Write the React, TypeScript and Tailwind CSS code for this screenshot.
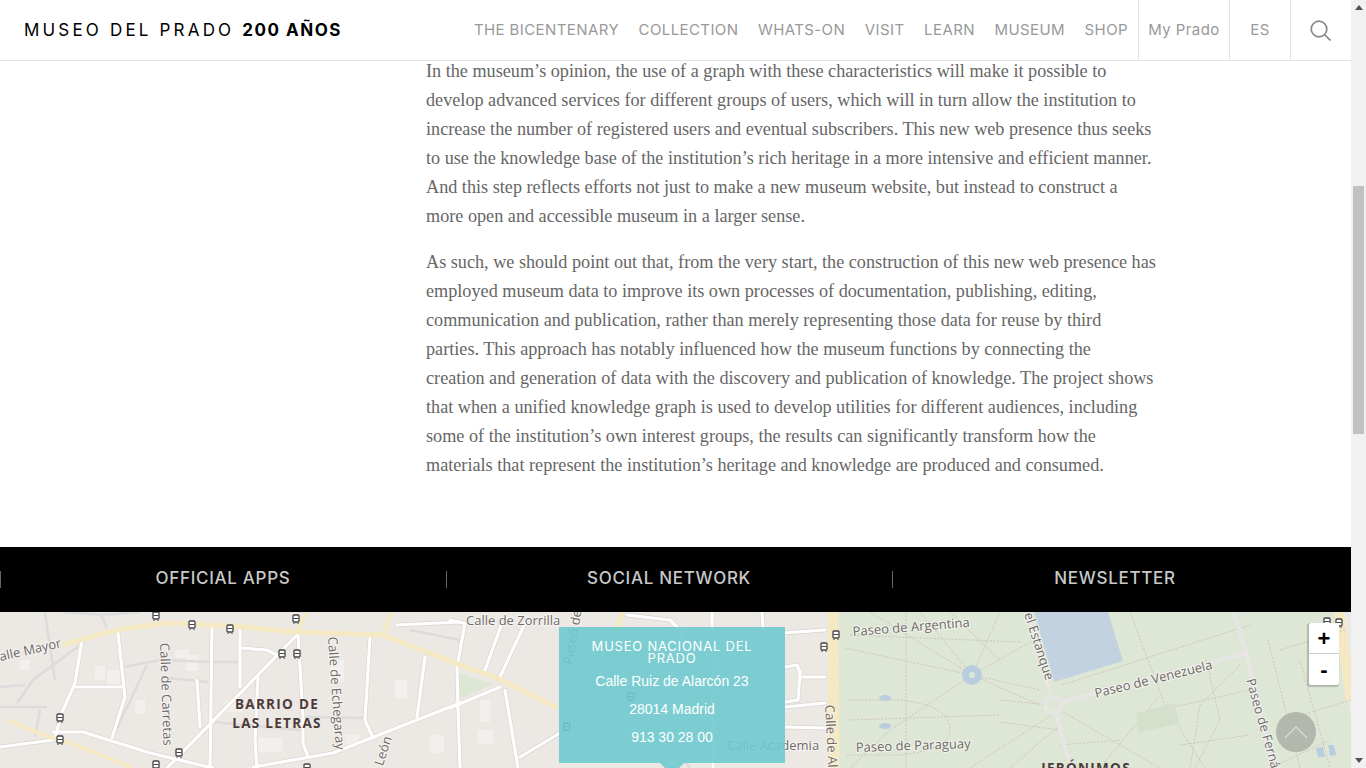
const p1 = [
  "In the museum’s opinion, the use of a graph with these characteristics will make it possible to",
  "develop advanced services for different groups of users, which will in turn allow the institution to",
  "increase the number of registered users and eventual subscribers. This new web presence thus seeks",
  "to use the knowledge base of the institution’s rich heritage in a more intensive and efficient manner.",
  "And this step reflects efforts not just to make a new museum website, but instead to construct a",
  "more open and accessible museum in a larger sense.",
];
const p2 = [
  "As such, we should point out that, from the very start, the construction of this new web presence has",
  "employed museum data to improve its own processes of documentation, publishing, editing,",
  "communication and publication, rather than merely representing those data for reuse by third",
  "parties. This approach has notably influenced how the museum functions by connecting the",
  "creation and generation of data with the discovery and publication of knowledge. The project shows",
  "that when a unified knowledge graph is used to develop utilities for different audiences, including",
  "some of the institution’s own interest groups, the results can significantly transform how the",
  "materials that represent the institution’s heritage and knowledge are produced and consumed.",
];
const nav = ["THE BICENTENARY", "COLLECTION", "WHATS-ON", "VISIT", "LEARN", "MUSEUM", "SHOP"];

const white = [
  "M82 640 L75 683 L60 717 L55 740",
  "M118 633 L125 697 L112 738",
  "M212 627 L210 768",
  "M240 628 L240 687",
  "M240 648 L267 650 L283 658",
  "M297 635 L167 768",
  "M298 633 L303 717 L303 743 L308 757",
  "M258 677 L255 740 L257 768",
  "M370 637 L365 720 L373 738",
  "M425 657 L417 717",
  "M460 703 L333 753 L253 767",
  "M53 732 L83 732 L150 753 L213 768",
  "M0 747 L53 740",
  "M75 687 L123 687",
  "M197 680 L200 727",
  "M397 625 L460 622",
  "M465 623 L457 667 L458 708 L460 768",
  "M502 623 L485 670",
  "M525 623 L500 677",
  "M505 690 L518 768",
  "M450 708 L500 687",
  "M560 733 L520 757",
  "M627 615 L670 620 L680 630 L684 650",
  "M712 612 L713 768",
  "M762 612 L763 627",
  "M783 633 L825 630",
  "M785 667 L797 665 L800 672 L798 700 L785 702",
  "M802 677 L825 677",
  "M785 707 L825 703",
  "M785 727 L825 728",
  "M450 620 L463 623",
];
const grey = [
  "M45 613 L55 680",
  "M0 687 L25 685",
  "M80 645 L33 680 L17 703",
  "M0 707 L47 707",
  "M40 710 L35 737",
  "M123 667 L160 660 L210 662 L238 662",
  "M147 665 L113 737",
  "M168 678 L208 682",
  "M100 613 L107 628",
  "M63 612 L103 615 L140 612",
  "M213 722 L300 730",
  "M305 717 L365 718",
  "M20 650 L0 660",
  "M410 630 L460 640",
  "M590 690 L660 730 L690 768",
  "M610 720 L640 670 L700 660",
];
const dashes = [
  "M870 612 L972 675 L1034 640","M845 648 L972 675 L1040 690","M972 675 L890 730 L850 768","M972 675 L1040 705","M972 675 L1000 612","M972 675 L920 612",
  "M848 700 L900 700 Q950 705 950 730 Q950 750 900 755 L845 755","M906 612 L906 768","M850 635 L1020 642","M1063 712 L1160 768","M1056 712 L970 768","M1060 725 L1010 768",
  "M1062 685 L1250 625","M1130 612 L1165 705 L1205 768","M1100 768 L1160 695","M1190 768 L1200 705 L1240 665","M1160 710 L1250 690","M1206 660 L1220 720 L1195 768",
  "M1050 612 L1060 680","M1268 640 L1300 768","M1280 650 L1345 630","M1285 720 L1351 700","M1300 660 L1330 768","M1270 768 L1330 740","M1180 745 L1250 735","M1120 740 L1060 745",
  "M1000 700 L1050 705","M1000 722 L1060 730","M850 720 L1000 715","M950 612 L1000 660",
];
const patches = [[107,670,13,18],[95,666,10,14],[186,655,12,16],[225,700,18,12],[258,738,24,14],[330,660,14,22],[395,680,12,18],[20,660,10,10],[135,700,10,14],[345,735,14,10],[480,700,10,22],[478,730,16,14],[430,735,14,18],[175,650,14,8]];
const trams = [[156,616],[192,625],[230,629],[296,619],[282,654],[297,654],[60,718],[60,740],[179,753],[156,765],[307,768],[836,635],[824,647],[631,697],[567,727],[1327,622],[1339,623]];

function MapArt() {
  const txt = { fontFamily: "'Open Sans', sans-serif", fontSize: 13, fill: "#6f6a66", stroke: "#ffffff", strokeOpacity: 0.55, strokeWidth: 2, style: { paintOrder: "stroke" as const } };
  return (
    <svg width="1351" height="156" viewBox="0 612 1351 156" className="block">
      <rect x="0" y="612" width="1351" height="156" fill="#ece8e4" />
      {patches.map(([x, y, w, h]) => <rect key={x + "-" + y} x={x} y={y} width={w} height={h} fill="#f2efec" />)}
      <path d="M838 612 H1351 V768 H838 Z" fill="#dee7d6" />
      <path d="M1336 612 H1351 V720 Z" fill="#ece8e4" />
      <path d="M455 672 L494 684 L458 700 Z" fill="#dee7d6" />
      <path d="M560 640 L700 640 L720 700 L640 760 L560 730 Z" fill="#dee7d6" opacity="0.5" />
      {grey.map((d) => <path key={d} d={d} stroke="#dcdcdc" strokeWidth="2.5" fill="none" />)}
      {white.map((d) => <path key={"c" + d} d={d} stroke="#d8d5d1" strokeWidth="4.4" fill="none" strokeLinejoin="round" strokeLinecap="round" />)}
      {white.map((d) => <path key={d} d={d} stroke="#ffffff" strokeWidth="3.2" fill="none" strokeLinejoin="round" strokeLinecap="round" />)}
      <path d="M62 645 L117 630 L167 623 L233 626 L297 632 L383 635 L460 665 L497 678 L558 708" stroke="#f5e9c4" strokeWidth="5" fill="none" strokeLinejoin="round" />
      <path d="M7 720 L50 737 L70 743 L133 768" stroke="#f5e9c4" strokeWidth="4" fill="none" />
      <path d="M622 612 L617 633" stroke="#f5e9c4" strokeWidth="5" fill="none" />
      <path d="M297 632 L306 612 M383 635 L391 612" stroke="#f5e9c4" strokeWidth="4" fill="none" />
      <path d="M833 612 L834 768" stroke="#f5e9c4" strokeWidth="11" fill="none" />
      <path d="M1339 612 L1351 700" stroke="#f5e9c4" strokeWidth="10" fill="none" />
      {dashes.map((d) => <path key={d} d={d} stroke="#cfc4b7" strokeWidth="1" strokeDasharray="2 1.5" fill="none" />)}
      <path d="M1034 612 H1108 L1123 661 L1054 682 Z" fill="#c3d2e1" />
      <circle cx="972" cy="675" r="10" fill="#b9cde0" />
      <circle cx="972" cy="675" r="3" fill="#dee7d6" />
      <ellipse cx="885" cy="698" rx="6" ry="3" fill="#b9cde0" />
      <ellipse cx="885" cy="726" rx="6" ry="3" fill="#b9cde0" />
      <path d="M1316 748 L1323 747 L1325 757 L1318 757 Z M1328 745 L1334 745 L1336 755 L1330 756 Z" fill="#b9cde0" />
      <path d="M1136 713 L1174 703 L1179 723 L1138 733 Z" fill="#d6dfca" />
      <path d="M1026 612 L1051 695 M1056 715 L1071 768 M1063 702 L1246 653 M1234 612 L1246 653 L1273 768" stroke="#e8e6e4" strokeWidth="4" fill="none" />
      <circle cx="1053" cy="705" r="8" fill="#dee7d6" stroke="#e8e6e4" strokeWidth="4" />
      {trams.map(([x, y]) => (
        <g key={x + "-" + y} transform={`translate(${x - 3} ${y - 4})`}>
          <rect x="0" y="0" width="6" height="7" rx="1" fill="#ffffff" stroke="#444444" strokeWidth="1.3" />
          <path d="M0.5 3.5 H5.5" stroke="#444444" />
          <path d="M1 8 V9 M5 8 V9" stroke="#444444" />
        </g>
      ))}
      <text {...txt} textAnchor="end" transform="translate(62 647) rotate(-13)">Calle Mayor</text>
      <text {...txt} transform="translate(466 625)">Calle de Zorrilla</text>
      <text {...txt} transform="translate(572 665) rotate(-80)">Paseo de</text>
      <text {...txt} transform="translate(160 643) rotate(88)">Calle de Carretas</text>
      <text {...txt} transform="translate(328 637) rotate(86)">Calle de Echegaray</text>
      <text {...txt} textAnchor="end" transform="translate(392 738) rotate(-72)">Calle de León</text>
      <text {...txt} transform="translate(825 705) rotate(87)">Calle de Al</text>
      <text {...txt} x="727" y="750">Calle Academia</text>
      <text {...txt} transform="translate(853 636) rotate(-4.5)">Paseo de Argentina</text>
      <text {...txt} transform="translate(856 752) rotate(-2)">Paseo de Paraguay</text>
      <text {...txt} transform="translate(1024 614) rotate(72)">el Estanque</text>
      <text {...txt} transform="translate(1096 698) rotate(-14)">Paseo de Venezuela</text>
      <text {...txt} transform="translate(1246 680) rotate(74)">Paseo de Fernán</text>
      <g fontFamily="'Open Sans', sans-serif" fontSize="13.5" fontWeight="700" letterSpacing="1.3" fill="#4d3b3b" textAnchor="middle">
        <text x="277" y="709">BARRIO DE</text>
        <text x="277" y="728">LAS LETRAS</text>
        <text x="1086" y="773">JERÓNIMOS</text>
      </g>
    </svg>
  );
}

export default function App() {
  return (
    <div className="flex h-[768px] w-[1366px] overflow-hidden bg-white">
      <div className="flex w-[1351px] flex-col">
        <header className="relative z-10 flex h-[61px] shrink-0 items-stretch border-b border-[#e2e2e2] bg-white font-['Inter',sans-serif]">
          <div className="flex flex-1 items-center pl-6 pt-[1px] text-[17px] tracking-[0.187em] text-black">
            MUSEO DEL PRADO&nbsp;<b className="font-bold tracking-[0.09em]">200 AÑOS</b>
          </div>
          <nav className="flex items-center gap-[19.6px] pr-[10px] text-[15px] tracking-[0.4px] text-[#999999]">
            {nav.map((n) => <span key={n}>{n}</span>)}
          </nav>
          <div className="flex w-[91px] items-center justify-center border-l border-[#e2e2e2] text-[15px] tracking-[0.4px] text-[#999999]">My Prado</div>
          <div className="flex w-[61px] items-center justify-center border-l border-[#e2e2e2] text-[15px] tracking-[0.4px] text-[#999999]">ES</div>
          <div className="flex w-[61px] items-center justify-center border-l border-[#e2e2e2] pr-[2px]">
            <svg width="21" height="21" viewBox="0 0 21 21" fill="none" stroke="#888888" strokeWidth="1.7">
              <circle cx="9" cy="9" r="7.8" />
              <path d="M14.5 14.5 L20.5 20.5" />
            </svg>
          </div>
        </header>
        <main className="h-[486px] shrink-0 pl-[426px] font-['Liberation_Serif',serif] text-[18.2px] leading-[29px] text-[#666666]">
          <p className="-mt-[4px] mb-[17px] whitespace-nowrap">
            {p1.map((l) => <span key={l} className="block">{l}</span>)}
          </p>
          <p className="whitespace-nowrap">
            {p2.map((l) => <span key={l} className="block">{l}</span>)}
          </p>
        </main>
        <section className="grid h-[65px] shrink-0 grid-cols-[446px_446px_446px_13px] bg-black font-['Inter',sans-serif] text-[17px] font-medium tracking-[0.7px] text-[#c8c8c8]">
          {["OFFICIAL APPS", "SOCIAL NETWORK", "NEWSLETTER"].map((t) => (
            <div key={t} className="relative flex items-center justify-center pb-[2px]">
              <span className="absolute left-0 top-[24px] h-[17px] w-px bg-[#666666]" />
              <span>{t}</span>
            </div>
          ))}
        </section>
        <section className="relative h-[156px] shrink-0 overflow-hidden">
          <MapArt />
          <div className="absolute left-[559px] top-[15px] flex h-[136px] w-[226px] flex-col items-center bg-[#6fcacf]/90 pt-[13px] text-center text-white">
            <div className="px-5 font-['Inter',sans-serif] text-[13px] leading-[12px] tracking-[0.06em]">MUSEO NACIONAL DEL PRADO</div>
            <div className="mt-[3px] font-['Liberation_Sans',sans-serif] text-sm leading-[28px]">Calle Ruiz de Alarcón 23</div>
            <div className="font-['Liberation_Sans',sans-serif] text-sm leading-[28px]">28014 Madrid</div>
            <div className="font-['Liberation_Sans',sans-serif] text-sm leading-[28px]">913 30 28 00</div>
          </div>
          <div className="absolute left-[660px] top-[151px] h-0 w-0 border-x-[12px] border-t-[12px] border-x-transparent border-t-[#6fcacf]/90" />
          <div className="absolute left-[1309px] top-[11px] flex w-[30px] flex-col rounded-[2px] bg-white font-['Liberation_Sans',sans-serif] text-[22px] font-bold text-black shadow-[-1px_1px_1px_1px_rgba(0,0,0,0.2)]">
            <div className="flex h-[31px] items-center justify-center border-b border-[#cccccc]">+</div>
            <div className="flex h-[31px] items-center justify-center">-</div>
          </div>
          <div className="absolute left-[1276px] top-[100px] flex h-[40px] w-[40px] items-center justify-center rounded-full bg-[#b4b7ae]">
            <svg width="24" height="14" viewBox="0 0 24 14" fill="none" stroke="#d8dbd3" strokeWidth="1.3">
              <path d="M1 13 L12 2 L23 13" />
            </svg>
          </div>
        </section>
      </div>
      <div className="flex h-full w-[15px] flex-col bg-[#f1f1f1]">
        <div className="flex h-[15px] items-center justify-center">
          <div className="h-0 w-0 border-x-[4px] border-b-[5px] border-x-transparent border-b-[#505050]" />
        </div>
        <div className="ml-[2px] mt-[171px] h-[248px] w-[11px] bg-[#c1c1c1]" />
        <div className="flex-1" />
        <div className="flex h-[15px] items-center justify-center">
          <div className="h-0 w-0 border-x-[4px] border-t-[5px] border-x-transparent border-t-[#505050]" />
        </div>
      </div>
    </div>
  );
}
